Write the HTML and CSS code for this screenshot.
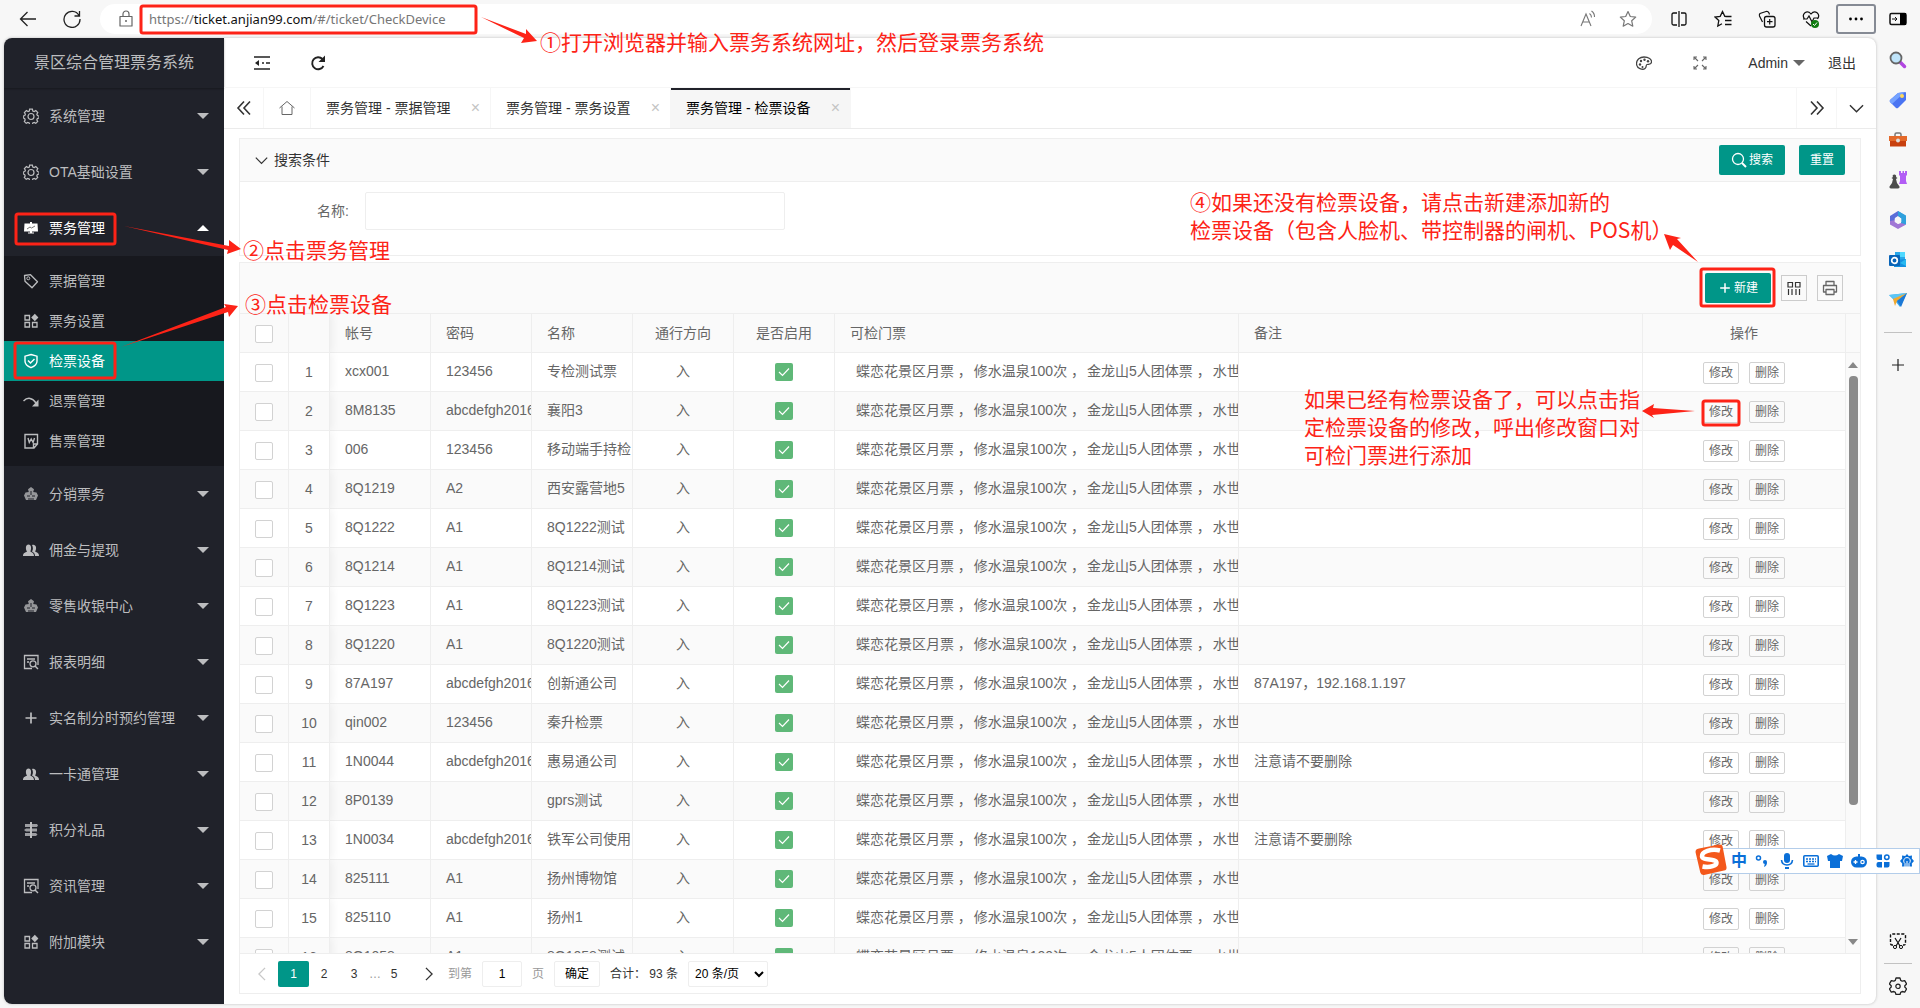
FILE: index.html
```html
<!DOCTYPE html>
<html lang="zh-CN">
<head>
<meta charset="utf-8">
<meta name="viewport" content="width=device-width, initial-scale=1">
<title>景区综合管理票务系统</title>
<link rel="stylesheet" href="styles.css">
</head>
<body>
<svg class="sprite" aria-hidden="true">
  <symbol id="gear" viewBox="0 0 16 16"><path d="M6.600 1.200h2.800l.4 1.800 1.400.6 1.600-1 2 2-1 1.600.6 1.400 1.600.4v2l-1.600.5-.6 1.400.9 1.500-1.900 1.900-1.600-.9-1.400.6-.4 1.500H6.600l-.4-1.500-1.400-.6-1.600.9-1.900-1.900.9-1.500-.6-1.400L.300 10V8l1.500-.4.6-1.400-1-1.600 2-2 1.600 1 1.300-.6z" fill="none" stroke="currentColor" stroke-width="1.200"/><circle cx="8" cy="8.500" r="3" fill="none" stroke="currentColor" stroke-width="1.200"/></symbol>
  <symbol id="board" viewBox="0 0 16 16"><path d="M1.500 3.500H7V2h2v1.500h5.500l.500 8H9v1h2v1H5v-1h2v-1H1z" fill="currentColor"/><path d="M4 9l3-2 1.500 1L12 6" fill="none" stroke="#777" stroke-width="1"/></symbol>
  <symbol id="tag" viewBox="0 0 16 16"><path d="M1.500 2.500l6-.8 7 7-5.500 6-7-6.500z" fill="none" stroke="currentColor" stroke-width="1.300" stroke-linejoin="round"/><circle cx="5.300" cy="5.300" r="1.500" fill="none" stroke="currentColor"/></symbol>
  <symbol id="blocks" viewBox="0 0 16 16"><path d="M2 2.500h4.500V7H2zM2 9.500h4.500V14H2zM9.500 9.500H14V14H9.500z" fill="none" stroke="currentColor" stroke-width="1.300"/><path d="M11.800.800l3.600 3.700-3.600 3.700-3.600-3.700z" fill="currentColor"/></symbol>
  <symbol id="shield" viewBox="0 0 16 16"><path d="M8 1.500l6 1.700v5c0 3-2.500 5-6 6.500-3.500-1.500-6-3.500-6-6.500v-5zM5 7.500l2.500 2.600L11.500 6" fill="none" stroke="currentColor" stroke-width="1.400"/></symbol>
  <symbol id="return" viewBox="0 0 16 16"><path d="M.500 8c4-4 9-3.500 12.500 2" fill="none" stroke="currentColor" stroke-width="1.500"/><path d="M15.500 6.500v7H9z" fill="currentColor"/></symbol>
  <symbol id="word" viewBox="0 0 16 16"><path d="M2 1.500h12.500v9.500l-3.500 4H2zM14 11h-3.500v4M5 5l1.300 4.500L8.200 6l1.900 3.500L11.500 5" fill="none" stroke="currentColor" stroke-width="1.400"/></symbol>
  <symbol id="hub" viewBox="0 0 16 16"><path d="M8 1l3 2.200-.8 2.800 3.300.5 1.500 3-2 4.500H3L1 9.500l1.500-3L5.800 6 5 3.200z" fill="currentColor" opacity=".75"/><path d="M8 5v4M4 10h3M9 10h3M5 13h6" stroke="#20222a" fill="none"/></symbol>
  <symbol id="users" viewBox="0 0 16 16"><path d="M0 14c0-3 2-3.500 4-4.300C2.300 7 2.500 2.500 5.500 2.500S8.700 7 7.300 9.500C9 10.500 11 11 11 14z" fill="currentColor"/><path d="M9 3c3.500-1.500 5.500 3 3 6.500 2 1 4 1.300 4 4.500h-4c0-2.500-1.500-3.700-3-4.500 1.200-2 1.300-4 0-6.500z" fill="currentColor"/></symbol>
  <symbol id="report" viewBox="0 0 16 16"><path d="M15 11V1.500H1.500V14.500H9M4 5h8M4 8h2" fill="none" stroke="currentColor" stroke-width="1.300"/><circle cx="10" cy="9.800" r="3" fill="none" stroke="currentColor" stroke-width="1.300"/><path d="M12 12l3 3" stroke="currentColor" stroke-width="1.400"/></symbol>
  <symbol id="plus" viewBox="0 0 16 16"><path d="M8 2.500v11M2.500 8h11" stroke="currentColor" stroke-width="1.700"/></symbol>
  <symbol id="sign" viewBox="0 0 16 16"><path d="M7 0h2v16H7z" fill="currentColor"/><path d="M2 2h12l1 1.500L14 5H2zM14 6.500H3L1 8l2 1.500h11zM2 11h11l1.500 1.500L13 14H2z" fill="currentColor" opacity=".8"/></symbol>
  <symbol id="lens" viewBox="0 0 16 16"><circle cx="7" cy="7" r="5.500" fill="none" stroke="currentColor" stroke-width="1.300"/><path d="M11 11l4 4" stroke="currentColor" stroke-width="2"/></symbol>
  <symbol id="chevron" viewBox="0 0 16 16"><path d="M1 4.500l7 7 7-7" fill="none" stroke="currentColor" stroke-width="1.500"/></symbol>
  <symbol id="double" viewBox="0 0 16 16"><path d="M2 1.500L8 8l-6 6.500M8 1.500L14 8l-6 6.500" fill="none" stroke="currentColor" stroke-width="1.600"/></symbol>
  <symbol id="star" viewBox="0 0 18 18"><path d="M9 1.500l2.300 5 5.400.6-4 3.700 1.100 5.400L9 13.500l-4.800 2.700 1.100-5.400-4-3.700 5.400-.6z" fill="none" stroke="currentColor" stroke-width="1.200" stroke-linejoin="round"/></symbol>
</svg>

<header class="browser-bar">
  <button class="tool" aria-label="后退"><svg width="18" height="18" viewBox="0 0 18 18"><path d="M17 9H2M8.500 2L1.500 9l7 7" fill="none" stroke="#222" stroke-width="1.300"/></svg></button>
  <button class="tool" aria-label="刷新"><svg width="18" height="18" viewBox="0 0 18 18"><path d="M16 5.500A8 8 0 1 0 17 9M16.500 1v5h-5" fill="none" stroke="#222" stroke-width="1.300"/></svg></button>
  <div class="address">
    <svg width="14" height="18" viewBox="0 0 14 18"><path d="M1 6.500h12v9.500H1zM4 6.500V4a3 3 0 0 1 6 0v2.500" fill="none" stroke="#666" stroke-width="1.200" stroke-linejoin="round"/><circle cx="7" cy="11" r="1" fill="#666"/></svg>
    <span class="url">https://<b>ticket.anjian99.com</b>/#/ticket/CheckDevice</span>
    <button class="tool small" aria-label="朗读"><svg width="18" height="18" viewBox="0 0 18 18"><path d="M2 16L7 4l5 12M4 12h6M10.500 3.500a5 5 0 0 1 2 4M12.500 1a7 7 0 0 1 3 6" fill="none" stroke="#777" stroke-width="1.100"/></svg></button>
    <button class="tool small" aria-label="收藏"><svg width="18" height="18" color="#777"><use href="#star"/></svg></button>
  </div>
  <button class="tool" aria-label="分屏"><svg width="18" height="18" viewBox="0 0 18 18"><path d="M7 3H3.500Q2 3 2 4.500v9Q2 15 3.500 15H7M11 3h3.500Q16 3 16 4.500v9q0 1.500-1.500 1.500H11M9 1v16" fill="none" stroke="#111" stroke-width="1.300"/></svg></button>
  <button class="tool" aria-label="收藏夹"><svg width="18" height="18" viewBox="0 0 18 18"><path d="M12.500 6.500L10.800 6.300 8.500 1.500 6.200 6.300 1 7l3.800 3.600-1 5.400L8 13.700M12 6.500H17.500M11 10.500H17.500M11 14.500H17.500" fill="none" stroke="#111" stroke-width="1.300"/></svg></button>
  <button class="tool" aria-label="集锦"><svg width="18" height="18" viewBox="0 0 18 18"><rect x="6.500" y="6.500" width="10.500" height="10.500" rx="2" fill="none" stroke="#111" stroke-width="1.300"/><path d="M11.700 9v5.500M9 11.700h5.500M4.500 12L1.500 6Q1 4.500 2 3.500L8 1.500q2-.5 3 1.500l.5 1.500" fill="none" stroke="#111" stroke-width="1.200"/></svg></button>
  <button class="tool" aria-label="浏览器概要"><svg width="18" height="18" viewBox="0 0 18 18"><path d="M2.500 9C-1 4 5-1 9 4c4-5 10 0 6.500 5M1 9h4l2-3 3 6 2-4h4M4 11.500L9 16" fill="none" stroke="#111" stroke-width="1.200"/><circle cx="13" cy="14" r="4" fill="#107c10"/><path d="M11 14l1.500 1.500 2.500-3" fill="none" stroke="#fff"/></svg></button>
  <button class="tool more" aria-label="更多"><svg width="16" height="4" viewBox="0 0 16 4"><circle cx="2.500" cy="2" r="1.400"/><circle cx="8" cy="2" r="1.400"/><circle cx="13.500" cy="2" r="1.400"/></svg></button>
  <button class="tool" aria-label="边栏"><svg width="18" height="14" viewBox="0 0 18 14"><rect x="1" y="1.500" width="16" height="11" rx="1.500" fill="none" stroke="#111" stroke-width="1.500"/><path d="M11 1h6v12h-6z"/><path d="M3 7h5M6 5l2 2-2 2" fill="none" stroke="#111"/></svg></button>
</header>

<div class="window">
  <div class="app">
    <aside class="sidebar">
      <div class="logo">景区综合管理票务系统</div>
      <nav id="menu"></nav>
    </aside>

    <main class="main">
      <div class="topbar">
        <button class="plain" aria-label="侧边伸缩"><svg width="16" height="14" viewBox="0 0 16 14"><path d="M0 1h16M8 7h2M12 7h4M0 13h16" stroke="#222" stroke-width="1.600"/><path d="M5 4v6L1 7z" fill="#222"/></svg></button>
        <button class="plain" aria-label="刷新"><svg width="16" height="16" viewBox="0 0 16 16"><path d="M13.500 11A6 6 0 1 1 12.500 4" fill="none" stroke="#222" stroke-width="1.900"/><path d="M15 .500V7H8.500z" fill="#222"/></svg></button>
        <span class="grow"></span>
        <button class="plain" aria-label="主题"><svg width="16" height="16" viewBox="0 0 16 16"><path d="M8 2c4.500 0 8 2 7.500 5.500-.5 2.500-3 1.500-4.500 2s0 2.500-2 4-8.500.500-8.500-5C.500 4.500 4 2 8 2z" fill="none" stroke="#444" stroke-width="1.300"/><g fill="#444"><circle cx="5" cy="6" r="1.200"/><circle cx="8.500" cy="4.800" r="1.200"/><circle cx="12" cy="6.300" r="1.200"/><circle cx="4" cy="9.500" r="1.200"/><circle cx="6.500" cy="12" r="1"/></g></svg></button>
        <button class="plain" aria-label="全屏"><svg width="14" height="14" viewBox="0 0 14 14"><path d="M1 4V1h3M10 1h3v3M13 10v3h-3M4 13H1v-3M1.500 1.500L5 5M12.500 1.500L9 5M12.500 12.500L9 9M1.500 12.500L5 9" fill="none" stroke="#666" stroke-width="1.100"/></svg></button>
        <a class="user" href="#">Admin<i class="caret"></i></a>
        <a class="logout" href="#">退出</a>
      </div>
      <div class="tabs">
        <button class="tab-control first" aria-label="左移"><svg class="flip" width="16" height="16"><use href="#double"/></svg></button>
        <button class="tab-control home" aria-label="主页"><svg width="16" height="16" viewBox="0 0 16 16"><path d="M.500 8L8 1.500 15.500 8M3 6.500v8h10v-8" fill="none" stroke="#666" stroke-width="1"/></svg></button>
        <a class="tab" href="#">票务管理 - 票据管理<span>×</span></a>
        <a class="tab" href="#">票务管理 - 票务设置<span>×</span></a>
        <a class="tab active" href="#">票务管理 - 检票设备<span>×</span></a>
        <span class="grow"></span>
        <button class="tab-control" aria-label="右移"><svg width="16" height="16"><use href="#double"/></svg></button>
        <button class="tab-control" aria-label="展开"><svg width="15" height="15"><use href="#chevron"/></svg></button>
      </div>

      <div class="content">
        <section class="search-panel">
          <div class="panel-head">
            <svg width="13" height="13"><use href="#chevron"/></svg><span>搜索条件</span>
            <button class="primary search"><svg width="16" height="16"><use href="#lens"/></svg>搜索</button>
            <button class="primary reset">重置</button>
          </div>
          <form class="panel-body">
            <label for="name">名称:</label>
            <input id="name" type="text">
          </form>
        </section>

        <section class="table-panel">
          <div class="table-tools">
            <button class="primary create"><svg width="14" height="14"><use href="#plus"/></svg>新建</button>
            <button class="tool-box" aria-label="筛选列"><svg width="14" height="14" viewBox="0 0 14 14"><path d="M1 1.500h4.500V6H1zM8.500 1.500H13V6H8.500zM1.500 8v6M5 8v6M9 8v6M12.500 8v6" fill="none" stroke="#333" stroke-width="1.200"/></svg></button>
            <button class="tool-box" aria-label="打印"><svg width="16" height="16" viewBox="0 0 16 16"><path d="M4 5V1.500h8V5M4 12H1.500V5.500h13V12H12M4 9.500h8v5H4z" fill="none" stroke="#666" stroke-width="1.300" stroke-linejoin="round"/></svg></button>
          </div>
          <div class="table-view">
            <div class="table-clip">
              <table>
                <colgroup><col class="c-check"><col class="c-num"><col class="c-std"><col class="c-std"><col class="c-std"><col class="c-std"><col class="c-std"><col><col><col class="c-ops"></colgroup>
                <thead><tr><th class="center"><input type="checkbox" aria-label="全选"></th><th class="fixed"></th><th>帐号</th><th>密码</th><th>名称</th><th class="center">通行方向</th><th class="center">是否启用</th><th>可检门票</th><th>备注</th><th class="center">操作</th></tr></thead>
                <tbody id="rows"></tbody>
              </table>
            </div>
            <div class="scroll-track"><div class="scroll-head"></div><i class="caret up"></i><div class="thumb"></div><i class="caret"></i></div>
          </div>
          <div class="pager">
            <button class="page prev" aria-label="上一页"><svg width="14" height="14"><use href="#chevron"/></svg></button>
            <a class="page current" href="#">1</a><a class="page" href="#">2</a><a class="page" href="#">3</a><span class="dots">…</span><a class="page" href="#">5</a>
            <button class="page next" aria-label="下一页"><svg width="14" height="14"><use href="#chevron"/></svg></button>
            <label class="muted" for="goto">到第</label><input id="goto" type="text" value="1"><span class="muted">页</span>
            <button class="confirm">确定</button>
            <span class="total">合计： 93 条</span>
            <select aria-label="每页条数"><option>20 条/页</option></select>
          </div>
        </section>
      </div>
    </main>
  </div>

  <aside class="edge-rail">
    <svg width="18" height="18" viewBox="0 0 18 18"><path d="M10.500 10.500l5 5" stroke="#b146e0" stroke-width="3.500" stroke-linecap="round"/><circle cx="7" cy="7" r="5.500" fill="#bfe4fa" stroke="#666" stroke-width="1.800"/></svg>
    <svg width="18" height="18" viewBox="0 0 18 18"><path d="M1 9L9 2l7-1q1 0 1 1v7l-8 8q-1 .600-2 0L1 11q-.600-1 0-2z" fill="#4a74f2"/><path d="M1 9L9 2l7-1L3 13 1 11q-.600-1 0-2z" fill="#75a2ff"/><circle cx="13" cy="5" r="2" fill="#ffd75a"/></svg>
    <svg width="18" height="18" viewBox="0 0 18 18"><path d="M6 5V3.500Q6 2 7.500 2h3Q12 2 12 3.500V5" fill="none" stroke="#777" stroke-width="1.500"/><path d="M1 5h16v10.500H1z" fill="#c8400e"/><path d="M0 5h18v5H0z" fill="#e4692a"/><circle cx="9" cy="9.500" r="2" fill="#ddd"/></svg>
    <svg width="18" height="18" viewBox="0 0 18 18"><path d="M10 0h2v2h1.500V0H15v2h1V0h2v4l-1 1v5l1 3h-8l1-3V5l-1-1z" fill="#b25df5"/><path d="M2 17.500q-2 0-1.500-2L3 12l1-4-1.500-1L4 6C2 2.500 8.500 2.500 7 6l1.500 1L7 8l1 4 2.500 3.500q.5 2-1.500 2z" fill="#4c4c4c"/></svg>
    <svg width="18" height="18" viewBox="0 0 18 18"><path d="M9 0l7 4.500-4 3L9 5 6 7v6l-5-3V5z" fill="#5a6ed8"/><path d="M9 0l8 4.500v9l-5 2V7L9 5z" fill="#2fa1dd"/><path d="M1 10l5-1 3 4 3-1 5 1.500L9 18l-8-4.500z" fill="#a077d5"/><path d="M9 5.500l3.300 2v3.500L9 13l-3.300-2V7.500z" fill="#f7f7f7"/></svg>
    <svg width="18" height="18" viewBox="0 0 18 18"><path d="M6 1h10v8H6z" fill="#28a8ea"/><path d="M11 1h5v5h-5z" fill="#50d9ff"/><path d="M5 9l12-1v8H5z" fill="#1490df"/><path d="M17 8v7l-6-3z" fill="#28b8ef"/><rect y="4" width="11" height="11" rx="1" fill="#0a65b8"/><circle cx="5.500" cy="9.500" r="2.800" fill="none" stroke="#fff" stroke-width="1.700"/></svg>
    <svg width="18" height="18" viewBox="0 0 18 18"><path d="M0 4l18-2-7 14-4-5z" fill="#38a9ef"/><path d="M0 4l18-2L6 9z" fill="#5cc6f5"/><path d="M18 2L4 8l2 7 2-5z" fill="#f3a92e"/><path d="M18 2L8 10l4 6z" fill="#1b79d6"/></svg>
    <hr>
    <svg width="18" height="18" viewBox="0 0 18 18"><path d="M9 3v12M3 9h12" stroke="#222" stroke-width="1.200"/></svg>
    <span class="grow"></span>
    <div class="rail-foot">
      <svg width="18" height="18" viewBox="0 0 18 18"><path d="M4 13H3q-1.500 0-1.500-1.500v-8Q1.500 2 3 2h12q1.500 0 1.500 1.500v8Q16.500 13 15 13h-1" fill="none" stroke="#111" stroke-width="1.400" stroke-dasharray="3 1.500"/><path d="M6 6l5 8M12 6l-5 8" stroke="#111" stroke-width="1.200"/><circle cx="6" cy="15" r="1.600" fill="none" stroke="#111"/><circle cx="12" cy="15" r="1.600" fill="none" stroke="#111"/></svg>
      <hr>
      <svg width="18" height="18" viewBox="0 0 18 18"><path d="M7 1h4l.7 2.400 1.500.8 2.500-.6 1.900 3.300-1.800 1.800v1.300l1.800 1.900-1.900 3.300-2.500-.7-1.500.9L11 17.500H7l-.7-2.100-1.500-.9-2.500.7-1.900-3.300L2.200 10V8.700L.400 6.900l1.900-3.300 2.500.6 1.500-.8z" fill="none" stroke="#222" stroke-width="1.300" stroke-linejoin="round"/><circle cx="9" cy="9.300" r="2.200" fill="none" stroke="#222" stroke-width="1.200"/></svg>
    </div>
  </aside>
</div>

<div class="ime">
  <svg class="ime-logo" width="32" height="32" viewBox="0 0 32 32"><path d="M4 4.500L24 .500q3-.500 3.600 2L31.500 23q.5 3-2.500 3.600L9 31q-3 .500-3.700-2.400L.600 8.500Q0 5 4 4.500z" fill="#f4581b"/><path d="M25 6.500C16 4 6.500 8 7 12.500c.5 4 14 2 14.500 6 .4 3-6 5.500-14 4" fill="none" stroke="#fff" stroke-width="4.500"/></svg>
  <span class="ime-mode">中</span>
  <svg width="16" height="16" viewBox="0 0 16 16"><circle cx="3.500" cy="5" r="2" fill="none" stroke="#0a6fd8" stroke-width="1.500"/><circle cx="10" cy="9" r="2" fill="#0a6fd8"/><path d="M12 9q0 4-3 5l1-4z" fill="#0a6fd8"/></svg>
  <svg width="16" height="16" viewBox="0 0 16 16"><rect x="5" y="0" width="6" height="10" rx="3" fill="#0a6fd8"/><path d="M2.500 7Q3 12 8 12t5.500-5" fill="none" stroke="#0a6fd8" stroke-width="1.600"/><path d="M6 14h4v2H6z" fill="#0a6fd8"/></svg>
  <svg width="16" height="16" viewBox="0 0 16 16"><rect x=".800" y="2.800" width="14.400" height="10.400" rx="1" fill="none" stroke="#0a6fd8" stroke-width="1.600"/><path d="M3 6h10M3 8.500h10" stroke="#0a6fd8" stroke-width="1.500" stroke-dasharray="2 1"/><path d="M4.500 11h7" stroke="#0a6fd8" stroke-width="1.300"/></svg>
  <svg width="16" height="16" viewBox="0 0 16 16"><path d="M4 1q4 3 8 0l4 2-1 5h-2v7H3V8H1L0 3z" fill="#0a6fd8"/></svg>
  <svg width="16" height="16" viewBox="0 0 16 16"><path d="M7 1h2v3H7z" fill="#0a6fd8"/><rect y="3.500" width="16" height="11" rx="5.500" fill="#0a6fd8"/><path d="M2.500 9h4M4.500 7v4" stroke="#fff" stroke-width="1.300"/><circle cx="11.500" cy="9" r="1.700" fill="none" stroke="#fff" stroke-width="1.200"/></svg>
  <svg width="16" height="16" viewBox="0 0 16 16"><path d="M1.500 1.500H7V7H3.500q-2 0-2-2zM9 9h5.500v3.500q0 2-2 2H9zM1.500 11q0-2 2-2H7v5.500H3.500q-2 0-2-2z" fill="#0a6fd8"/><circle cx="11.800" cy="4.200" r="2.200" fill="none" stroke="#0a6fd8" stroke-width="1.500"/></svg>
  <svg width="16" height="16" viewBox="0 0 16 16"><path d="M8 1l1.800 2L13 2.500l-.2 3L15 8l-2.200 2.500.2 3H3l.200-3L1 8l2.200-2.500-.2-3L6.200 3z" fill="#0a6fd8"/><path d="M6 14v-3.500a3.300 3.300 0 1 1 4 0V14M8 8v7" fill="none" stroke="#fff" stroke-width="1"/></svg>
</div>

<div class="annotations">
  <svg width="1920" height="1008" viewBox="0 0 1920 1008">
    <g fill="none" stroke="#fd2317" stroke-width="3">
      <rect x="141" y="6" width="335" height="27" rx="2"/>
      <rect x="16" y="214" width="99" height="30" rx="2"/>
      <rect x="15" y="343" width="100" height="35" rx="2"/>
      <rect x="1701" y="269" width="73" height="37" rx="2"/>
      <rect x="1703" y="401" width="36" height="24" rx="2"/>
    </g>
    <g fill="#fd2317">
      <path d="M481 17L526 34 526 29 537 41 521 43 524 38z"/>
      <path d="M124 226L229 246 229 240 241 249 227 254 228 250z"/>
      <path d="M121 347L226 307 224 304 238 306 229 317 228 312z"/>
      <path d="M1698 262L1677 239 1681 238 1664 234 1670 250 1673 245z"/>
      <path d="M1695 411L1652 415 1654 418 1642 411 1654 404 1653 408z"/>
    </g>
  </svg>
  <p class="note n1">①打开浏览器并输入票务系统网址，然后登录票务系统</p>
  <p class="note n2">②点击票务管理</p>
  <p class="note n3">③点击检票设备</p>
  <p class="note n4">④如果还没有检票设备，请点击新建添加新的<br>检票设备（包含人脸机、带控制器的闸机、POS机）</p>
  <p class="note n5">如果已经有检票设备了，可以点击指<br>定检票设备的修改，呼出修改窗口对<br>可检门票进行添加</p>
</div>
<script src="script.js"></script>
</body>
</html>
```
FILE: styles.css
```css
* { box-sizing: border-box; }

body {
  margin: 0;
  height: 100vh;
  display: flex;
  flex-direction: column;
  overflow: hidden;
  position: relative;
  background: #f7f7f7;
  color: #333;
  font: 14px/20px "Liberation Sans", "Noto Sans CJK SC", sans-serif;
}

a { color: inherit; text-decoration: none; }
button { margin: 0; padding: 0; border: 0; background: none; font: inherit; color: inherit; display: flex; align-items: center; justify-content: center; }
input, select { font: inherit; }
svg { display: block; flex: none; }
.sprite { position: absolute; width: 0; height: 0; }
.grow { flex: 1; }

.caret { border: 6px solid transparent; border-top-color: currentColor; border-bottom-width: 0; }
.caret.up { border-top-width: 0; border-bottom: 6px solid currentColor; }

/* browser toolbar */
.browser-bar { display: flex; align-items: center; height: 38px; flex: none; padding-left: 6px; }
.tool { width: 44px; height: 30px; flex: none; }
.tool.small { width: 40px; }
.tool.more { width: 40px; margin-left: 3px; border: 2px solid #858a94; border-radius: 3px; }
.address { flex: 1; display: flex; align-items: center; height: 30px; margin: 0 5px 0 6px; padding: 0 4px 0 19px; border-radius: 15px; background: #fff; }
.url { flex: 1; margin-left: 16px; font: 13px/20px "Noto Sans", sans-serif; color: #767676; }
.url b { font-weight: 400; color: #111; }

/* window: app and browser side rail */
.window { flex: 1; min-height: 0; display: flex; }
.app { flex: 1; min-width: 0; display: flex; margin: 0 0 4px 4px; border-radius: 8px; background: #fff; overflow: hidden; box-shadow: 0 0 3px #bbb; }
.edge-rail { width: 44px; display: flex; flex-direction: column; align-items: center; gap: 22px; padding: 13px 0; }
.edge-rail hr { width: 28px; margin: 1px 0; border: 0; border-top: 1px solid #c2c2c2; }
.rail-foot { display: flex; flex-direction: column; align-items: center; gap: 12px; }

/* navigation */
.sidebar { width: 220px; flex: none; background: #20222a; color: #bcbdbf; }
.logo { height: 50px; line-height: 50px; text-align: center; font-size: 16px; box-shadow: 0 1px 2px rgba(0, 0, 0, .3); }
.nav-item { display: flex; align-items: center; height: 56px; padding: 0 15px 0 19px; }
.nav-item svg { width: 16px; height: 16px; margin-right: 10px; }
.nav-item span { flex: 1; }
.nav-item.open { color: #fff; }
.submenu { padding: 5px 0; background: #17181e; }
.submenu .nav-item { height: 40px; }
.submenu .nav-item.active { background: #009688; color: #fff; }

/* header and tabs */
.main { flex: 1; min-width: 0; display: flex; flex-direction: column; }
.topbar { display: flex; align-items: center; height: 50px; flex: none; border-bottom: 1px solid #f6f6f6; padding: 0 20px 0 10px; }
.plain { width: 56px; height: 48px; }
.user { display: flex; align-items: center; gap: 5px; margin-left: 20px; }
.user .caret { color: #666; }
.logout { margin-left: 23px; }
.tabs { display: flex; height: 41px; flex: none; border-bottom: 1px solid #ebebeb; }
.tab-control { width: 40px; border-left: 1px solid #f6f6f6; color: #333; }
.tab-control.first { width: 39px; border-left: 0; }
.tab-control.home { width: 48px; border-right: 1px solid #f6f6f6; }
.flip { transform: scaleX(-1); }
.tab { width: 180px; display: flex; align-items: center; justify-content: space-between; padding: 0 10px 0 15px; border-right: 1px solid #f6f6f6; }
.tab span { color: #c4c4c4; font-size: 16px; }
.tab.active { background: #f6f6f6; color: #000; box-shadow: inset 0 2px #20222a; }

/* search panel */
.content { flex: 1; min-height: 0; display: flex; flex-direction: column; gap: 6px; padding: 9px 15px 10px; }
.search-panel { flex: none; border: 1px solid #eee; }
.panel-head { display: flex; align-items: center; height: 43px; padding: 0 15px; background: #fafafa; border-bottom: 1px solid #eee; }
.panel-head span { flex: 1; margin-left: 6px; }
.primary { height: 30px; border-radius: 2px; background: #009688; color: #fff; font-size: 12px; }
.primary.search { width: 66px; gap: 2px; margin-right: 14px; }
.primary.reset { width: 46px; }
.primary.create { width: 66px; gap: 2px; }
.panel-body { display: flex; align-items: center; height: 73px; padding: 0 0 16px; color: #666; }
.panel-body label { width: 109px; text-align: right; }
.panel-body input { width: 420px; height: 38px; margin-left: 16px; border: 1px solid #eee; border-radius: 2px; }

/* data table */
.table-panel { flex: 1; min-height: 0; display: flex; flex-direction: column; border: 1px solid #eee; }
.table-tools { display: flex; align-items: center; justify-content: flex-end; height: 51px; flex: none; padding: 0 17px 0 0; background: #fafafa; border-bottom: 1px solid #eee; }
.tool-box { width: 26px; height: 26px; margin-left: 10px; border: 1px solid #ccc; }
.table-view { flex: 1; min-height: 0; display: flex; border-bottom: 1px solid #eee; }
.table-clip { flex: 1; min-width: 0; overflow: hidden; }
table { width: 100%; table-layout: fixed; border-collapse: separate; border-spacing: 0; color: #666; }
.c-check { width: 49px; }
.c-num { width: 41px; }
.c-std { width: 101px; }
.c-ops { width: 203px; }
th, td { height: 39px; padding: 0 0 0 15px; border: solid #eee; border-width: 0 1px 1px 0; text-align: left; font-weight: 400; white-space: nowrap; overflow: hidden; line-height: 28px; }
td { padding-bottom: 2px; }
thead th, tbody tr:nth-child(even) td { background: #fafafa; }
th.center, td.center { padding-left: 0; text-align: center; }
td.fixed, th.fixed { padding: 0; text-align: center; position: relative; overflow: visible; box-shadow: 2px 0 8px rgba(0, 0, 0, .06); clip-path: inset(0 -10px 0 0); }
td input, th input { appearance: none; display: block; width: 18px; height: 18px; margin: 2px auto 0; border: 1px solid #d2d2d2; border-radius: 2px; background: #fff; }
td input { margin-top: 4px; }
.enabled-cell { display: block; position: relative; width: 18px; height: 18px; margin: 2px auto 0; }
.enabled-cell input { margin: 0; border: 0; background: #5fb878; }
.enabled-cell svg { position: absolute; inset: 3px; }
.tickets span { margin-left: 2px; }
.ops { display: flex; justify-content: center; gap: 10px; padding-top: 4px; }
.ops button { width: 36px; height: 22px; border: 1px solid #d2d2d2; border-radius: 2px; font-size: 12px; }
.scroll-track { width: 14px; flex: none; display: flex; flex-direction: column; align-items: center; padding-bottom: 8px; background: #fafafa; color: #888; }
.scroll-head { align-self: stretch; height: 39px; margin-bottom: 9px; border-bottom: 1px solid #eee; }
.scroll-track .caret { border-left-width: 5px; border-right-width: 5px; }
.thumb { width: 9px; height: 429px; margin: 8px 0 auto; border-radius: 4px; background: #8b8b8b; }

/* pagination */
.pager { display: flex; align-items: center; height: 39px; flex: none; padding: 0 7px; font-size: 12px; }
.page { width: 30px; height: 26px; display: flex; align-items: center; justify-content: center; border-radius: 2px; }
.page svg { transform: rotate(-90deg); }
.page.prev { color: #c8c8c8; }
.page.prev svg { transform: rotate(90deg); }
.page.current { width: 31px; margin-left: 1px; background: #009688; color: #fff; }
.page.next { margin: 0 4px 0 5px; }
.dots { width: 10px; text-align: center; color: #999; }
.muted { color: #999; }
.pager input { width: 40px; height: 26px; margin: 0 10px; border: 1px solid #eee; border-radius: 2px; text-align: center; }
.confirm { width: 46px; height: 26px; margin: 0 10px; border: 1px solid #eee; border-radius: 2px; color: #000; }
.total { margin-right: 10px; }
.pager select { width: 80px; height: 26px; padding: 0 2px; border: 1px solid #eee; border-radius: 2px; background: #fff; color: #000; }

/* input method bar floating over the page */
.ime { position: absolute; right: 0; bottom: 134px; display: flex; align-items: center; gap: 8px; width: 208px; height: 26px; padding-left: 18px; border: 1px solid #b3cdea; background: #fff; }
.ime-logo { position: absolute; left: -18px; top: -5px; }
.ime-mode { width: 16px; color: #0a6fd8; font-size: 16px; font-weight: 700; }

/* tutorial notes over the page */
.annotations { position: absolute; inset: 0; pointer-events: none; }
.note { position: absolute; margin: 0; color: #fd2317; font: 21px/28px "Noto Sans CJK SC", sans-serif; white-space: nowrap; }
.n1 { left: 540px; top: 27px; }
.n2 { left: 243px; top: 235px; }
.n3 { left: 245px; top: 289px; }
.n4 { left: 1190px; top: 187px; }
.n5 { left: 1304px; top: 384px; }
```
FILE: script.js
```js
const icon = (name) => `<svg><use href="#${name}"/></svg>`;

const menu = [
  ["gear", "系统管理"],
  ["gear", "OTA基础设置"],
  ["board", "票务管理", [
    ["tag", "票据管理"],
    ["blocks", "票务设置"],
    ["shield", "检票设备"],
    ["return", "退票管理"],
    ["word", "售票管理"],
  ]],
  ["hub", "分销票务"],
  ["users", "佣金与提现"],
  ["hub", "零售收银中心"],
  ["report", "报表明细"],
  ["plus", "实名制分时预约管理"],
  ["users", "一卡通管理"],
  ["sign", "积分礼品"],
  ["report", "资讯管理"],
  ["blocks", "附加模块"],
];

document.getElementById("menu").innerHTML = menu.map(([ic, text, children]) => `
  <a class="nav-item ${children ? "open" : ""}" href="#">${icon(ic)}<span>${text}</span><i class="caret ${children ? "up" : ""}"></i></a>
  ${children ? `<div class="submenu">${children.map(([ci, ct]) =>
    `<a class="nav-item ${ct === "检票设备" ? "active" : ""}" href="#">${icon(ci)}<span>${ct}</span></a>`).join("")}</div>` : ""}
`).join("");

const devices = [
  ["xcx001", "123456", "专检测试票", ""],
  ["8M8135", "abcdefgh2016", "襄阳3", ""],
  ["006", "123456", "移动端手持检", ""],
  ["8Q1219", "A2", "西安露营地5", ""],
  ["8Q1222", "A1", "8Q1222测试", ""],
  ["8Q1214", "A1", "8Q1214测试", ""],
  ["8Q1223", "A1", "8Q1223测试", ""],
  ["8Q1220", "A1", "8Q1220测试", ""],
  ["87A197", "abcdefgh2016", "创新通公司", "87A197，192.168.1.197"],
  ["qin002", "123456", "秦升检票", ""],
  ["1N0044", "abcdefgh2016", "惠易通公司", "注意请不要删除"],
  ["8P0139", "", "gprs测试", ""],
  ["1N0034", "abcdefgh2016", "铁军公司使用", "注意请不要删除"],
  ["825111", "A1", "扬州博物馆", ""],
  ["825110", "A1", "扬州1", ""],
  ["8Q1058", "A1", "8Q1058测试", ""],
];
const tickets = "&nbsp;" + ["蝶恋花景区月票", "修水温泉100次", "金龙山5人团体票", "水世界"]
  .map((name) => `<span>${name}</span>`).join(" ，");

document.getElementById("rows").innerHTML = devices.map(([account, password, name, remark], i) => `
  <tr>
    <td class="center"><input type="checkbox" aria-label="选择 ${account}"></td>
    <td class="fixed">${i + 1}</td>
    <td>${account}</td><td>${password}</td><td>${name}</td>
    <td class="center">入</td>
    <td class="center"><label class="enabled-cell"><input type="checkbox" checked aria-label="启用"><svg width="12" height="12" viewBox="0 0 12 12"><path d="M1 6l3.500 3.500L11 2.500" fill="none" stroke="#fff" stroke-width="1.200"/></svg></label></td>
    <td class="tickets">${tickets}</td><td>${remark}</td>
    <td class="center"><div class="ops"><button>修改</button><button>删除</button></div></td>
  </tr>`).join("");
```
